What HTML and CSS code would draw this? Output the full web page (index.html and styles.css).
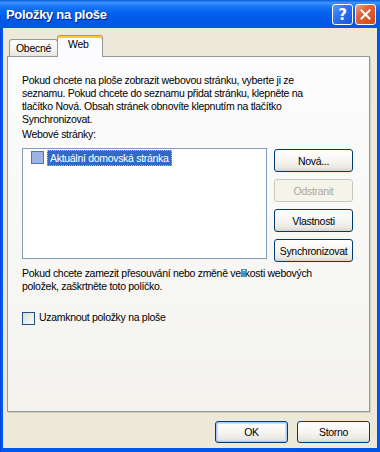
FILE: index.html
```html
<!DOCTYPE html>
<html lang="cs">
<head>
  <meta charset="UTF-8">
  <title>Položky na ploše</title>
  <link rel="stylesheet" href="styles.css">
</head>
<body>
  <div class="window">
    <div class="titlebar">
      <span class="title">Položky na ploše</span>
      <div class="caption-buttons">
        <div class="cap-btn help">?</div>
        <div class="cap-btn close">
          <svg width="11" height="11" viewBox="0 0 11 11"><path d="M1.5 1.5 L9.5 9.5 M9.5 1.5 L1.5 9.5" stroke="#fff" stroke-width="2" stroke-linecap="square"/></svg>
        </div>
      </div>
    </div>

    <div class="client">
      <div class="tabs">
        <div class="tab">Obecné</div>
        <div class="tab active">Web</div>
      </div>

      <div class="panel">
        <p class="text">Pokud chcete na ploše zobrazit webovou stránku, vyberte ji ze<br>seznamu. Pokud chcete do seznamu přidat stránku, klepněte na<br>tlačítko Nová. Obsah stránek obnovíte klepnutím na tlačítko<br>Synchronizovat.</p>
        <p class="label">Webové stránky:</p>

        <div class="list-row">
          <div class="list">
            <div class="list-item">
              <span class="item-check"></span>
              <span class="item-text">Aktuální domovská stránka</span>
            </div>
          </div>
          <div class="side-buttons">
            <div class="btn">Nová...</div>
            <div class="btn disabled">Odstranit</div>
            <div class="btn">Vlastnosti</div>
            <div class="btn">Synchronizovat</div>
          </div>
        </div>

        <p class="text note">Pokud chcete zamezit přesouvání nebo změně velikosti webových<br>položek, zaškrtněte toto políčko.</p>

        <div class="check-row">
          <span class="checkbox"></span>
          <span class="check-label">Uzamknout položky na ploše</span>
        </div>
      </div>

      <div class="footer">
        <div class="btn wide default">OK</div>
        <div class="btn wide">Storno</div>
      </div>
    </div>
  </div>
</body>
</html>
```

FILE: styles.css
```css
body {
  margin: 0;
  font-family: "Liberation Sans", Arial, sans-serif;
  font-size: 10.5px;
  letter-spacing: -0.3px;
  color: #000;
}

.window {
  width: 380px;
  height: 452px;
  display: flex;
  flex-direction: column;
  background: linear-gradient(to right, #0831d9 0, #0058ee 1px, #0055e5 100%);
}

.titlebar {
  height: 28px;
  flex: none;
  display: flex;
  align-items: center;
  justify-content: space-between;
  padding: 0 4px 0 6px;
  background: linear-gradient(to bottom, #0a5cdc 0%, #3d95ff 10%, #1a78f8 22%, #0462ee 45%, #0058e6 75%, #0256e8 100%);
}

.title {
  color: #fff;
  font-weight: bold;
  font-size: 13px;
  letter-spacing: -0.3px;
  text-shadow: 1px 1px 0 #0a1d80;
  margin-top: 1px;
}

.caption-buttons {
  display: flex;
  gap: 2px;
  margin-top: 1px;
}

.cap-btn {
  width: 21px;
  height: 21px;
  box-sizing: border-box;
  border: 1px solid #fff;
  border-radius: 3px;
  display: flex;
  align-items: center;
  justify-content: center;
  color: #fff;
}

.help {
  background: linear-gradient(135deg, #5b9aff 0%, #2f74f4 40%, #1655e0 100%);
  font-family: "DejaVu Sans", sans-serif;
  font-weight: bold;
  font-size: 15px;
  letter-spacing: 0;
}

.close {
  background: linear-gradient(135deg, #f2a48a 0%, #e4653a 35%, #cf4716 100%);
}

.client {
  flex: 1;
  margin: 0 3px 4px 3px;
  padding: 7px 7px 0 4px;
  background: #ece9d8;
  display: flex;
  flex-direction: column;
}

.tabs {
  display: flex;
  align-items: flex-end;
  height: 21px;
  padding-left: 2px;
}

.tab {
  height: 17px;
  box-sizing: border-box;
  padding: 2px 6px 0 6px;
  border: 1px solid #919b9c;
  border-bottom: none;
  border-radius: 3px 3px 0 0;
  background: linear-gradient(#fefefe, #f4f3ee 60%, #e8e6dc);
  line-height: 13px;
}

.tab.active {
  height: 22px;
  margin-bottom: -1px;
  position: relative;
  z-index: 1;
  padding: 2px 14px 0 10px;
  border-top: 1px solid #e68b2c;
  box-shadow: inset 0 2px 0 #ffc73c;
  background: #fcfcfe;
  margin-left: -1px;
}

.panel {
  flex: 1;
  border: 1px solid #919b9c;
  box-shadow: 1px 1px 0 #d0cebf;
  background: linear-gradient(#fcfcfe, #f4f3ee);
  padding: 17px 15px 0 14px;
}

.text {
  margin: 0;
  line-height: 13px;
}

.label {
  margin: 2px 0 0;
  line-height: 13px;
}

.list-row {
  display: flex;
  margin-top: 7px;
  gap: 7px;
}

.list {
  width: 245px;
  height: 111px;
  box-sizing: border-box;
  border: 1px solid #7f9db9;
  background: #fff;
  padding: 0 0 0 8px;
}

.list-item {
  display: flex;
  align-items: center;
  height: 17px;
}

.item-check {
  width: 13px;
  height: 13px;
  box-sizing: border-box;
  border: 1px solid #4f72c4;
  background: #9fb4e6;
  margin-right: 3px;
}

.item-text {
  background: #316ac5;
  color: #fff;
  border: 1px dotted #e0b860;
  padding: 0 2px;
  line-height: 14px;
}

.side-buttons {
  display: flex;
  flex-direction: column;
  gap: 7px;
  margin-top: 1px;
}

.btn {
  width: 79px;
  height: 23px;
  box-sizing: border-box;
  border: 1px solid #003c74;
  border-radius: 3px;
  background: linear-gradient(#ffffff, #f5f4f0 55%, #eae8e0 85%, #d8d2c6);
  display: flex;
  align-items: center;
  justify-content: center;
}

.btn.disabled {
  border-color: #c9c7ba;
  background: #f5f4ea;
  color: #aca899;
}

.note {
  margin-top: 5px;
}

.check-row {
  display: flex;
  align-items: flex-start;
  margin-top: 18px;
}

.checkbox {
  width: 13px;
  height: 13px;
  box-sizing: border-box;
  border: 1px solid #1c5180;
  background: linear-gradient(135deg, #dcdcd7, #fbfbf9);
  margin: 1px 4px 0 0;
}

.check-label {
  line-height: 13px;
}

.footer {
  display: flex;
  justify-content: flex-end;
  gap: 9px;
  padding: 9px 0 5px;
}

.btn.wide {
  width: 73px;
  height: 22px;
}

.btn.default {
  box-shadow: inset 0 0 0 1px #a9c9f5, inset 0 0 0 2px #cde0fa;
}
```
